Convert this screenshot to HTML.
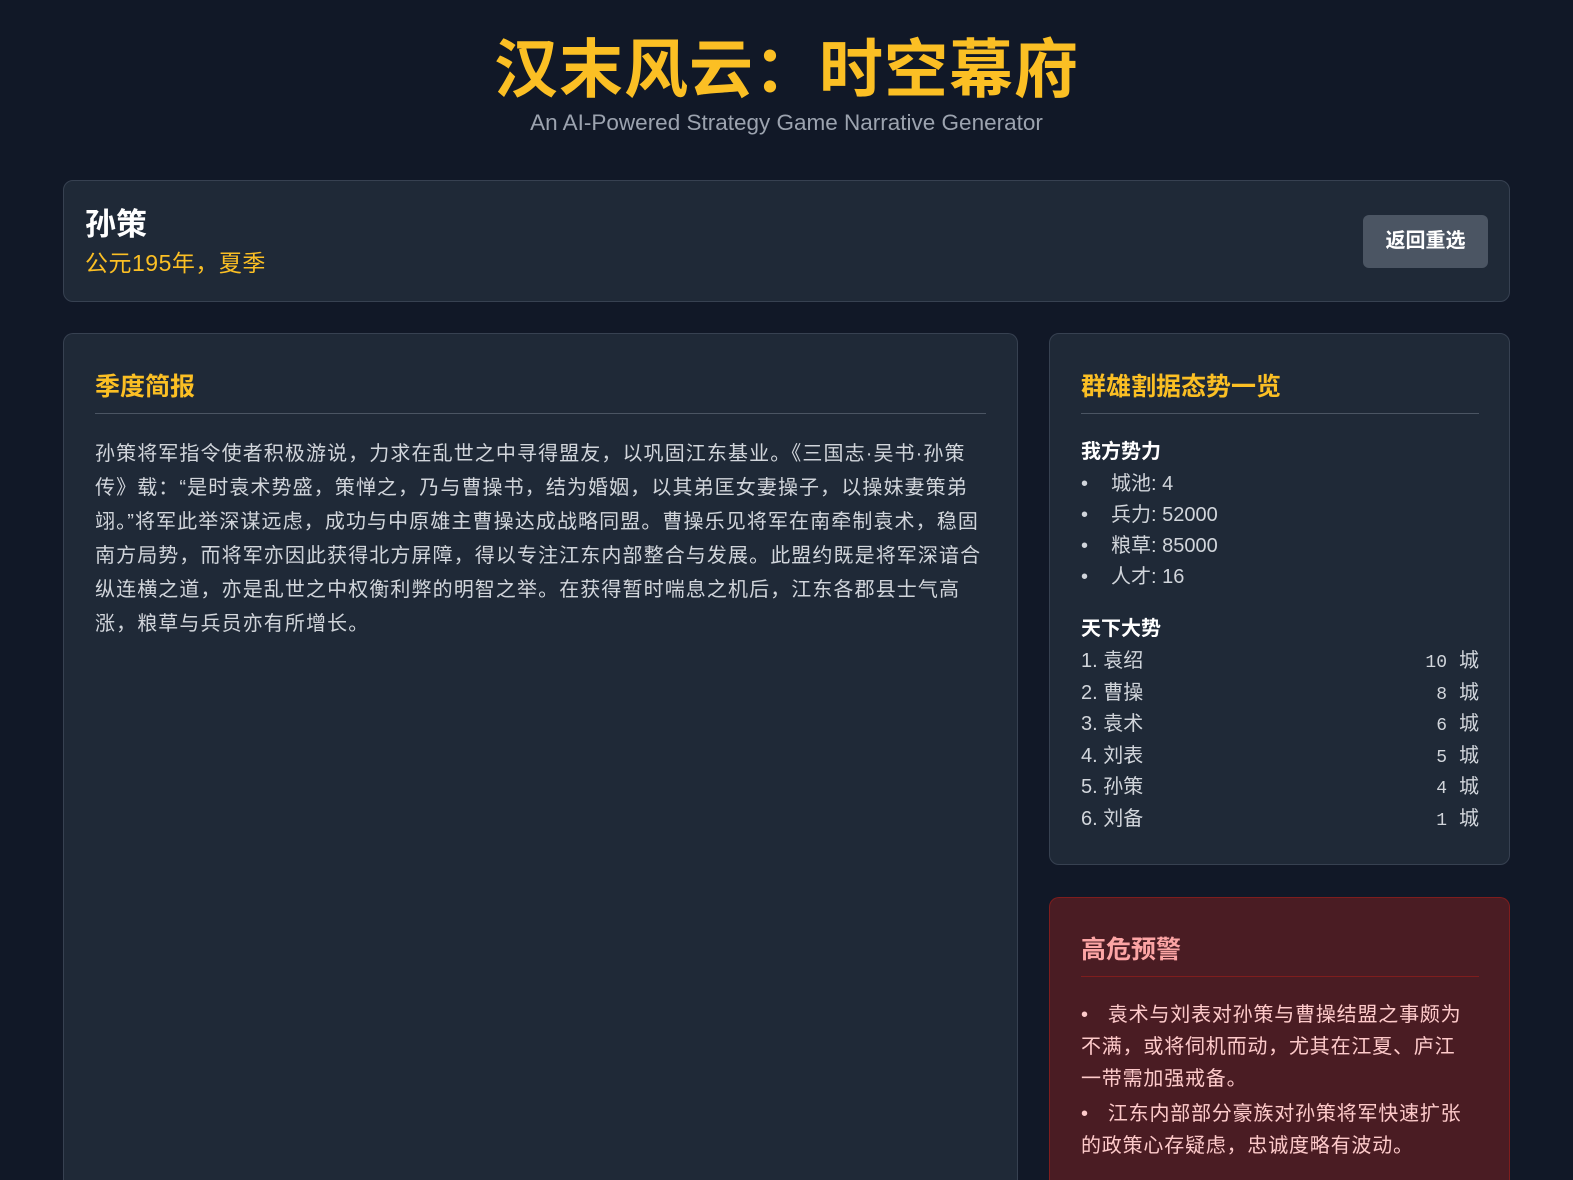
<!DOCTYPE html>
<html><head><meta charset="utf-8">
<style>
*{margin:0;padding:0;box-sizing:border-box}
html,body{width:1573px;height:1180px;overflow:hidden}
body{background:#111827;font-family:"Liberation Sans","Noto Sans CJK SC",sans-serif;color:#d1d5db;position:relative}
#wrap{position:absolute;left:0;top:0;width:1573px;height:1180px;overflow:hidden}
.title{position:absolute;top:31px;left:0;width:1573px;text-align:center;font-size:64px;font-weight:bold;color:#fbbf24;line-height:78px;letter-spacing:1px}
.sub{position:absolute;top:108px;left:0;width:1573px;text-align:center;font-size:22.5px;color:#9ca3af;line-height:30px}
.card{position:absolute;background:#1f2937;border:1px solid #374151;border-radius:10px}
.info{left:63px;top:180px;width:1447px;height:122px}
.name{position:absolute;left:21px;top:25px;font-size:31px;font-weight:bold;color:#fff;line-height:38px}
.date{position:absolute;left:21px;top:66px;font-size:23px;color:#fbbf24;line-height:32px;letter-spacing:0.5px}
.btn{position:absolute;right:21px;top:34px;width:125px;height:53px;background:#4b5563;border-radius:6px;color:#fff;font-weight:bold;font-size:20px;text-align:center;line-height:53px}
.main{left:63px;top:333px;width:955px;height:847px;border-bottom:none;border-radius:10px 10px 0 0}
.side{left:1049px;top:333px;width:461px;height:532px}
.warn{left:1049px;top:897px;width:461px;height:283px;background:#4a1c23;border-color:#7f1d1d;border-bottom:none;border-radius:10px 10px 0 0}
h2{position:absolute;font-size:25px;font-weight:bold;color:#fbbf24;line-height:34px}
.hr{position:absolute;height:1px;background:#4b5563}
.para{position:absolute;left:31px;top:103px;font-size:20px;line-height:34px;color:#d1d5db;white-space:nowrap;letter-spacing:1.1px}
h3{position:absolute;left:31px;font-size:20px;font-weight:bold;color:#fff;line-height:28px}
.li{position:absolute;left:31px;font-size:20px;line-height:31px;color:#d1d5db;white-space:nowrap}
.li b{display:inline-block;width:30px;font-weight:normal}
.row{position:absolute;left:31px;width:398px;font-size:20px;line-height:31px;color:#d1d5db}
.row span{position:absolute;right:0;top:0}
.row i{font-style:normal;font-family:"Liberation Mono",monospace;font-size:18px;margin-right:12px}
.wl{position:absolute;left:31px;width:410px;font-size:20px;line-height:32px;color:#fecaca;white-space:nowrap;letter-spacing:0.8px}
</style></head><body><div id="wrap">
<div class="title">汉末风云：时空幕府</div>
<div class="sub">An AI-Powered Strategy Game Narrative Generator</div>

<div class="card info">
<div class="name">孙策</div>
<div class="date">公元195年，夏季</div>
<div class="btn">返回重选</div>
</div>

<div class="card main">
<h2 style="left:31px;top:36px">季度简报</h2>
<div class="hr" style="left:31px;top:79px;width:891px"></div>
<div class="para">孙策将军指令使者积极游说，力求在乱世之中寻得盟友，以巩固江东基业。《三国志·吴书·孙策<br>传》载：“是时袁术势盛，策惮之，乃与曹操书，结为婚姻，以其弟匡女妻操子，以操妹妻策弟<br>翊。”将军此举深谋远虑，成功与中原雄主曹操达成战略同盟。曹操乐见将军在南牵制袁术，稳固<br>南方局势，而将军亦因此获得北方屏障，得以专注江东内部整合与发展。此盟约既是将军深谙合<br>纵连横之道，亦是乱世之中权衡利弊的明智之举。在获得暂时喘息之机后，江东各郡县士气高<br>涨，粮草与兵员亦有所增长。</div>
</div>

<div class="card side">
<h2 style="left:31px;top:36px">群雄割据态势一览</h2>
<div class="hr" style="left:31px;top:79px;width:398px"></div>
<h3 style="top:104px">我方势力</h3>
<div class="li" style="top:135px"><b>•</b>城池: 4</div>
<div class="li" style="top:166px"><b>•</b>兵力: 52000</div>
<div class="li" style="top:197px"><b>•</b>粮草: 85000</div>
<div class="li" style="top:228px"><b>•</b>人才: 16</div>
<h3 style="top:281px">天下大势</h3>
<div class="row" style="top:312px">1. 袁绍<span><i>10</i>城</span></div>
<div class="row" style="top:344px">2. 曹操<span><i>8</i>城</span></div>
<div class="row" style="top:375px">3. 袁术<span><i>6</i>城</span></div>
<div class="row" style="top:407px">4. 刘表<span><i>5</i>城</span></div>
<div class="row" style="top:438px">5. 孙策<span><i>4</i>城</span></div>
<div class="row" style="top:470px">6. 刘备<span><i>1</i>城</span></div>
</div>

<div class="card warn">
<h2 style="left:31px;top:35px;color:#fca5a5">高危预警</h2>
<div class="hr" style="left:31px;top:78px;width:398px;background:#7f1d1d"></div>
<div class="wl" style="top:101px">•&nbsp;&nbsp;&nbsp;袁术与刘表对孙策与曹操结盟之事颇为<br>不满，或将伺机而动，尤其在江夏、庐江<br>一带需加强戒备。</div>
<div class="wl" style="top:200px">•&nbsp;&nbsp;&nbsp;江东内部部分豪族对孙策将军快速扩张<br>的政策心存疑虑，忠诚度略有波动。</div>
</div>
</div></body></html>
